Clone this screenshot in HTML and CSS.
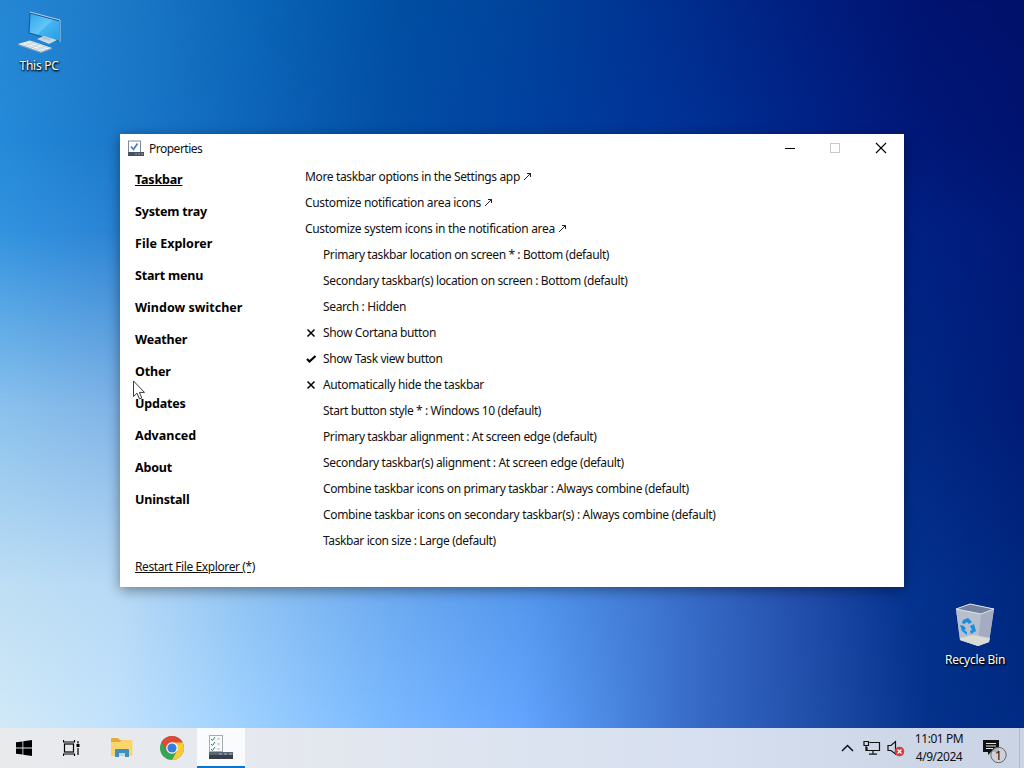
FILE: index.html
```html
<!DOCTYPE html>
<html lang="en">
<head>
<meta charset="utf-8">
<title>Properties</title>
<link rel="stylesheet" href="styles.css">
</head>
<body>
<div class="screen">
  <div class="wall wall-top"></div>
  <div class="wall wall-upper"></div>
  <div class="wall wall-mid"></div>
  <div class="wall wall-low"></div>
  <div class="wall wall-base"></div>
  <div class="wall wall-bottom"></div>

  <div class="desk-icon pc">
    <svg width="48" height="48" viewBox="0 0 48 48">
      <defs><linearGradient id="scr" x1="0" y1="0" x2="1" y2="1"><stop offset="0" stop-color="#2fa6ec"/><stop offset=".5" stop-color="#62c6f7"/><stop offset=".52" stop-color="#45b4f0"/><stop offset="1" stop-color="#269ce6"/></linearGradient></defs>
      <path d="M15 5L44.500 13V33.500L14 25Z" fill="url(#scr)" stroke="#17568e" stroke-width="1"/>
      <path d="M15 4L45 12V34" fill="none" stroke="#b5d0dc" stroke-width="1"/>
      <path d="M22 31L29 28L42 32L34 36Z" fill="#c6dbe6"/>
      <path d="M27 28L36 30.500V33L27 31Z" fill="#b2cad8"/>
      <path d="M3 36L15 32.500L37 40L26 44Z" fill="#eef3f7"/>
      <path d="M3 36L26 44L37 40V41L26 45L3 37Z" fill="#92a9b9"/>
      <path d="M7 36L28 43M10 34.500L32 42M13 33L35 40.500M10 38L20 34M15 40L25 36M21 42L31 38" stroke="#b4c3ce" stroke-width=".6"/>
    </svg>
    <span>This PC</span>
  </div>

  <div class="desk-icon bin">
    <svg width="48" height="48" viewBox="0 0 48 48">
      <path d="M5 9L19 4L43 9L38 42L27 46L9 40Z" fill="#aab5cb"/>
      <path d="M5 9L30 14L27 46L9 40Z" fill="#b7bfcf"/>
      <path d="M30 14L43 9L38 42L27 46Z" fill="#a3acc1"/>
      <path d="M5 9L19 4L43 9L30 14Z" fill="#75809c" stroke="#dde3ee" stroke-width="1"/>
      <path d="M9 38L22 35L39 38L38 42L27 46L9 40Z" fill="#dadbd4"/>
      <g fill="#178ee0"><path d="M12 20L17 18L21 22L18 24L16 22L13 24L11 23Z"/><path d="M19 26L23 24L25 31L20 34L19 31L21 30Z"/><path d="M9 25L13 26L15 29L13 30L16 32V35L11 31Z"/></g>
    </svg>
    <span>Recycle Bin</span>
  </div>

  <main class="window">
    <header class="titlebar">
      <svg width="18" height="18" viewBox="0 0 18 18">
        <rect x="1.500" y="1" width="12" height="11.500" fill="#fff" stroke="#7c899a"/>
        <path d="M4 6.500L6.500 9.500L10.500 3.500" fill="none" stroke="#3b7bc8" stroke-width="1.600"/>
        <rect x="1" y="12" width="16" height="4" fill="#475263"/>
        <path d="M8 14H10M11 14H13M14 14H16" stroke="#94a0b2"/>
      </svg>
      <span class="title">Properties</span>
      <svg class="win-buttons" width="120" height="28" viewBox="0 0 120 28">
        <path d="M11 13.500H21" stroke="#000"/>
        <rect x="56.500" y="8.500" width="9" height="9" fill="none" stroke="#c9c9c9"/>
        <path d="M102 8L112 18M112 8L102 18" stroke="#000" stroke-width="1.100"/>
      </svg>
    </header>
    <div class="content">
      <div class="side">
        <nav class="tabs">
          <a class="active">Taskbar</a><a>System tray</a><a class="wide">File Explorer</a><a>Start menu</a><a class="wide">Window switcher</a><a>Weather</a><a>Other</a><a>Updates</a><a class="wide">Advanced</a><a>About</a><a>Uninstall</a>
        </nav>
        <a class="restart">Restart File Explorer (*)</a>
      </div>
      <ul class="options">
        <li class="link">More taskbar options in the Settings app <svg class="arrow" width="9" height="9" viewBox="0 0 9 9"><path d="M1 8L7.500 1.500M4 1.500H7.500V5"/></svg></li>
        <li class="link">Customize notification area icons <svg class="arrow" width="9" height="9" viewBox="0 0 9 9"><path d="M1 8L7.500 1.500M4 1.500H7.500V5"/></svg></li>
        <li class="link">Customize system icons in the notification area <svg class="arrow" width="9" height="9" viewBox="0 0 9 9"><path d="M1 8L7.500 1.500M4 1.500H7.500V5"/></svg></li>
        <li>Primary taskbar location on screen * : Bottom (default)</li>
        <li>Secondary taskbar(s) location on screen : Bottom (default)</li>
        <li>Search : Hidden</li>
        <li class="mark"><svg width="18" height="12" viewBox="0 0 18 12"><path d="M2.500 2.500L9.500 9.500M9.500 2.500L2.500 9.500"/></svg>Show Cortana button</li>
        <li class="mark"><svg width="18" height="12" viewBox="0 0 18 12"><path class="tick" d="M2 6L4.500 8.500L10.500 3"/></svg>Show Task view button</li>
        <li class="mark"><svg width="18" height="12" viewBox="0 0 18 12"><path d="M2.500 2.500L9.500 9.500M9.500 2.500L2.500 9.500"/></svg>Automatically hide the taskbar</li>
        <li>Start button style * : Windows 10 (default)</li>
        <li>Primary taskbar alignment : At screen edge (default)</li>
        <li>Secondary taskbar(s) alignment : At screen edge (default)</li>
        <li>Combine taskbar icons on primary taskbar : Always combine (default)</li>
        <li>Combine taskbar icons on secondary taskbar(s) : Always combine (default)</li>
        <li>Taskbar icon size : Large (default)</li>
      </ul>
    </div>
  </main>

  <svg class="cursor" width="14" height="21" viewBox="0 0 14 21"><path d="M1.500 1V16.500L5 13.200L7.500 19L9.800 18L7.400 12.400H12.500Z" fill="#fff" stroke="#222" stroke-width=".9"/></svg>

  <footer class="taskbar">
    <div class="apps">
      <div class="app start"><svg width="16" height="16" viewBox="0 0 16 16"><path d="M0 2.300L6.500 1.400V7.500H0ZM7.300 1.300L16 0V7.500H7.300ZM0 8.400H6.500V14.600L0 13.700ZM7.300 8.400H16V16L7.300 14.700Z"/></svg></div>
      <div class="app view"><svg width="17" height="16" viewBox="0 0 17 16" fill="none" stroke="#000" stroke-width="1.200"><rect x="1.500" y="4" width="9" height="8"/><path d="M.5 0V2H11.500V0M.5 16V14H11.500V16M15 1V3.500M15 8V15"/><path d="M13.500 5.500H16.500" stroke-width="3"/></svg></div>
      <div class="app explorer"><svg width="22" height="20" viewBox="0 0 22 20">
        <path d="M0 1Q0 0 1 0H7L9 2H20Q21 2 21 3V18H0Z" fill="#e0ac3b"/>
        <path d="M0 4H9L11 2H20.500Q21.500 2 21.500 3V17Q21.500 18 20.500 18H0Z" fill="#fbd56c"/>
        <path d="M4 19V12Q4 11 5 11H17Q18 11 18 12V19H14V15H8V19Z" fill="#3d8fc1"/><path d="M8 15H14V18H8Z" fill="#b8d9df"/>
      </svg></div>
      <div class="app chrome"><svg width="24" height="24" viewBox="0 0 24 24">
        <circle cx="12" cy="12" r="12" fill="#35a552"/>
        <path d="M1.600 6A12 12 0 0 1 22.400 6L12 12Z" fill="#df4939"/><path d="M1.600 6L6.800 15L12 6Z" fill="#df4939"/>
        <path d="M12 6.500H22.600A12 12 0 0 1 12 24L17 15Z" fill="#fccb34"/>
        <circle cx="12" cy="12" r="5.800" fill="#fff"/><circle cx="12" cy="12" r="4.600" fill="#337de0"/>
      </svg></div>
      <div class="app current"><svg width="26" height="26" viewBox="0 0 26 26">
        <rect x="1.500" y="1.500" width="13" height="16" fill="#f7faf9" stroke="#a4adb3"/>
        <path d="M3 5L4.500 6.500L7 3M3 10L4.500 11.500L7 8M3 15L4.500 16.500L7 13" fill="none" stroke="#397c74"/><path d="M9 5H12M9 10H12M9 15H12" stroke="#adb5ba"/>
        <path d="M1 18H25V24H1Z" fill="#596472"/><path d="M1 21H25V25H1Z" fill="#353e4b"/><path d="M11 20H14M16 20H19M21 20H24" stroke="#8b98a8" stroke-width="1.500"/>
      </svg></div>
    </div>
    <div class="tray">
      <svg width="66" height="24" viewBox="0 0 66 24" fill="none" stroke="#111" stroke-width="1.200">
        <path d="M1 15L6.500 9.500L12 15" stroke-width="1.500"/>
        <path d="M28.500 6.500H38.500V14.500H26V11M32 15V18M28 18.200H36M23 5.500H27.500V9.500H23ZM25 10V14.500H27"/>
        <path d="M47 9.500H50L54.500 5.500V18L50 14.500H47Z"/>
        <circle cx="58.500" cy="15.500" r="4.800" fill="#d63a3a" stroke="none"/><path d="M56.500 13.500L60.500 17.500M60.500 13.500L56.500 17.500" stroke="#fff"/>
      </svg>
      <div class="clock"><span>11:01 PM</span><span>4/9/2024</span></div>
      <svg class="notice" width="26" height="28" viewBox="0 0 26 28">
        <path d="M1 4H17V16H9L6 19V16H1Z" fill="#111"/><path d="M4 7.500H14M4 10H14M4 12.500H11" stroke="#dce3ef" stroke-width="1"/>
        <circle cx="16.500" cy="19" r="7.700" fill="#ccd0d8" fill-opacity=".85" stroke="#666" stroke-width="1"/>
        <text x="16.500" y="23.500" text-anchor="middle" class="count">1</text>
      </svg>
    </div>
  </footer>
</div>
</body>
</html>
```
FILE: styles.css
```css
* { box-sizing: border-box; }
body { margin: 0; font-family: "Noto Sans", sans-serif; font-size: 12px; color: #111; }
.screen { position: relative; width: 1024px; height: 768px; overflow: hidden; display: flex; flex-direction: column; align-items: flex-start; }
svg { display: block; flex: none; }

/* Wallpaper: horizontal colour ramps blended into each other from top to bottom */
.wall { position: absolute; inset: 0; }
.wall-top { background: linear-gradient(90deg, #2588d5 0, #1d79c8 120px, #0b66b8 250px, #004fa3 400px, #00449c 520px, #003292 650px, #001f80 800px, #001370 930px, #00116b 1024px); }
.wall-upper { background: linear-gradient(90deg, #258ad9 0, #1c7acb 110px, #0e65b9 250px, #0450a7 380px, #0041a0 520px, #003296 680px, #002489 800px, #001878 920px, #001370 1024px); mask-image: linear-gradient(transparent 0, #000 140px); }
.wall-mid { background: linear-gradient(90deg, #3293df 0, #2b84d5 110px, #1b6fc5 280px, #0448a8 520px, #003298 750px, #002184 910px, #001978 1024px); mask-image: linear-gradient(transparent 140px, #000 230px); }
.wall-low { background: linear-gradient(90deg, #8bc2ed 0, #82b5e7 110px, #4b91df 350px, #2666c2 600px, #103d96 850px, #002783 920px, #001c78 1024px); mask-image: linear-gradient(transparent 230px, #000 410px); }
.wall-base { background: linear-gradient(90deg, #bfdff4 0, #b8daf6 120px, #8fc3f3 250px, #6ba9f0 400px, #5396ec 530px, #3f78d2 650px, #234eac 800px, #04338f 910px, #002880 1024px); mask-image: linear-gradient(transparent 410px, #000 590px); }
.wall-bottom { background: linear-gradient(90deg, #d1e9f7 0, #c2e2fc 110px, #a1d3ff 230px, #7ebcff 370px, #64a5ff 520px, #4e8ce6 600px, #3669c5 700px, #1c4ba4 830px, #04318a 930px, #002b83 1024px); mask-image: linear-gradient(transparent 590px, #000 728px); }

.desk-icon { position: absolute; width: 76px; display: flex; flex-direction: column; align-items: center; gap: 2px; color: #fff; line-height: 16px; text-shadow: 0 1px 2px #000, 1px 1px 2px #000; letter-spacing: -.28px; white-space: nowrap; }
.pc { left: 1px; top: 8px; }
.bin { left: 937px; top: 600px; gap: 4px; }

.window { position: relative; margin: 134px 0 0 120px; width: 784px; height: 453px; background: #fff; box-shadow: 0 3px 12px rgba(0,0,0,.42); display: flex; flex-direction: column; }
.titlebar { height: 29px; padding-left: 7px; display: flex; align-items: center; gap: 4px; flex: none; }
.title { letter-spacing: -.5px; }
.win-buttons { margin-left: auto; margin-right: 10px; }
.content { display: flex; flex: 1; padding-left: 15px; }
.side { width: 170px; display: flex; flex-direction: column; justify-content: space-between; padding: 1px 0 10px; }
.tabs { display: flex; flex-direction: column; font-size: 12.500px; font-weight: 700; line-height: 32px; letter-spacing: -.18px; color: #000; align-items: flex-start; }
.tabs .wide { letter-spacing: .02px; }
.active, .restart { text-decoration: underline; text-underline-offset: 1px; }
.restart { letter-spacing: -.4px; line-height: 20px; }
.options { list-style: none; margin: 0; padding: 1px 0 0; line-height: 26px; letter-spacing: -.36px; white-space: nowrap; }
.options li { padding-left: 18px; height: 26px; }
.options li:nth-child(2), .options li:nth-child(3) { letter-spacing: -.32px; }
.options li:nth-child(4), .options li:nth-child(8), .options li:nth-child(10), .options li:nth-child(11), .options li:nth-child(15) { letter-spacing: -.39px; }
.options li:nth-child(14) { letter-spacing: -.33px; }
.options .link { padding-left: 0; }
.arrow { display: inline-block; fill: none; stroke: #222; stroke-width: 1; }
.options .mark { padding-left: 0; display: flex; align-items: center; }
.mark path { fill: none; stroke: #000; stroke-width: 1.500; }
.mark .tick { stroke-width: 2.200; }
.cursor { position: absolute; left: 132px; top: 380px; }

.taskbar { position: relative; margin-top: auto; width: 1024px; height: 40px; background: linear-gradient(90deg, #e8eaec 0, #e6e9ee 240px, #dde4f0 500px, #d7e0f0 700px, #cdd7e8 900px, #cbd4e4 1024px); display: flex; justify-content: space-between; }
.apps { display: flex; }
.app { width: 49px; height: 40px; display: flex; align-items: center; justify-content: center; }
.start { width: 48px; }
.view { width: 47px; }
.explorer { width: 54px; }
.chrome { width: 46px; }
.current { background: #fafbfd; border-bottom: 2px solid #0875ce; margin-left: 2px; width: 48px; }
.tray { display: flex; align-items: center; padding-right: 3px; border-right: 1px solid #b3bac8; margin-right: 4px; }
.clock { width: 66px; margin-left: -1px; display: flex; flex-direction: column; align-items: center; line-height: 18px; letter-spacing: -.45px; }
.notice { margin: 4px 8px 0 10px; }
.count { font-family: "Noto Sans", sans-serif; font-size: 13px; fill: #111; }
```
